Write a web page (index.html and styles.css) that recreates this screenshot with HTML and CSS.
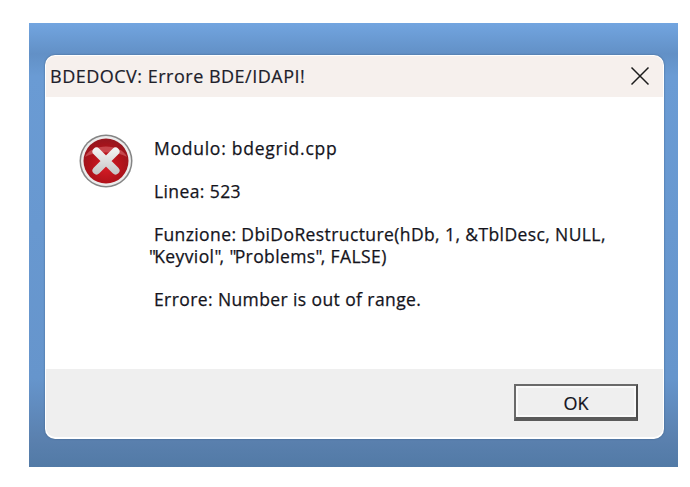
FILE: index.html
```html
<!DOCTYPE html>
<html lang="en">
<head>
    <meta charset="UTF-8">
    <title>BDEDOCV: Errore BDE/IDAPI!</title>
    <link rel="stylesheet" href="styles.css">
</head>
<body>
    <div class="desktop">
        <div class="dialog">
            <div class="titlebar">
                <span class="title">BDEDOCV: Errore BDE/IDAPI!</span>
                <svg class="close" width="20" height="20" viewBox="0 0 20 20">
                    <path d="M1.5 1.5L18.5 18.5M18.5 1.5L1.5 18.5" stroke="#1c1c1c" stroke-width="1.5" fill="none"/>
                </svg>
            </div>
            <div class="content">
                <svg class="error-icon" width="54" height="54" viewBox="0 0 54 54">
                    <defs>
                        <radialGradient id="redFill" cx="50%" cy="62%" r="58%">
                            <stop offset="0" stop-color="#d81c26"/>
                            <stop offset="0.65" stop-color="#b0121a"/>
                            <stop offset="1" stop-color="#98161e"/>
                        </radialGradient>
                        <linearGradient id="crossFill" gradientUnits="userSpaceOnUse" x1="0" y1="13" x2="0" y2="41">
                            <stop offset="0" stop-color="#f6f6f6"/>
                            <stop offset="1" stop-color="#c4c4c4"/>
                        </linearGradient>
                    </defs>
                    <circle cx="27" cy="27" r="26.500" fill="#858585"/>
                    <circle cx="27" cy="27" r="25" fill="#ececec"/>
                    <circle cx="27" cy="27" r="22.500" fill="url(#redFill)"/>
                    <path d="M6 23C12 9 42 9 48 23C38 17 16 17 6 23Z" fill="#d9686c" opacity="0.6"/>
                    <path d="M17.500 17.500L36.500 36.500M36.500 17.500L17.500 36.500" stroke="url(#crossFill)" stroke-width="8" stroke-linecap="round" fill="none"/>
                </svg>
                <div class="message">
                    <p class="module">Modulo: bdegrid.cpp</p>
                    <p>Linea: 523</p>
                    <p>Funzione: DbiDoRestructure(hDb, 1, &amp;TblDesc, NULL,<br><span class="quote">"</span>Keyviol<span class="quote">"</span>, <span class="quote">"</span>Problems<span class="quote">"</span>, FALSE)</p>
                    <p>Errore: Number is out of range.</p>
                </div>
            </div>
            <div class="footer">
                <button class="ok">OK</button>
            </div>
        </div>
    </div>
</body>
</html>
```
FILE: styles.css
```css
html, body {
    margin: 0;
    height: 100%;
    background-color: #fff;
}
body {
    padding: 23px 12px 20px 29px;
    box-sizing: border-box;
    font-family: "Open Sans", "Noto Sans", sans-serif;
    color: #14141c;
}
.desktop {
    width: 649px;
    height: 444px;
    box-sizing: border-box;
    padding: 32px 14px 28px 16px;
    background: linear-gradient(#72a5e0 0%, #6290c6 7%, #6a9bd4 12%, #6695cc 80%, #5a80ae 94%, #527aa6 100%);
}
.dialog {
    display: flex;
    flex-direction: column;
    height: 100%;
    box-sizing: border-box;
    padding: 1px 1px 2px 1px;
    border-radius: 10px;
    background-color: #fff;
    overflow: hidden;
    box-shadow: 0 0 2px #3f5f85;
}
.titlebar {
    display: flex;
    justify-content: space-between;
    align-items: center;
    height: 41px;
    flex: none;
    padding: 0 13px 0 4px;
    background-color: #f6f0ed;
    border-radius: 9px 9px 0 0;
}
.title {
    font-size: 18px;
    letter-spacing: 0.5px;
    color: #20202a;
    -webkit-text-stroke: 0.2px #20202a;
    margin-top: -1px;
}
.close {
    margin-top: -1px;
}
.content {
    display: flex;
    flex: 1;
    background-color: #fff;
}
.error-icon {
    flex: none;
    margin: 37px 0 0 33px;
}
.message {
    margin: 40px 0 0 16px;
    font-size: 17.500px;
    line-height: 22px;
    letter-spacing: 0.4px;
    -webkit-text-stroke: 0.25px #14141c;
}
.message p {
    margin: 0 0 21px 0;
    text-indent: 5px;
}
.message .module {
    letter-spacing: 0.75px;
}
.quote {
    letter-spacing: -1.800px;
}
.footer {
    display: flex;
    justify-content: flex-end;
    align-items: flex-start;
    height: 68px;
    flex: none;
    box-sizing: border-box;
    padding: 15px 25px 0 0;
    background-color: #efefef;
    border-radius: 0 0 9px 9px;
}
.ok {
    width: 124px;
    height: 37px;
    padding: 3px 0 0 0;
    font-family: inherit;
    font-size: 18px;
    color: #14141c;
    background-color: #efefef;
    border: 2px solid;
    border-color: #6a6a6a #4a4a4a #5a5a5a #6a6a6a;
    border-bottom-width: 4px;
    box-shadow: inset 0 0 0 2px #fafafa;
    -webkit-text-stroke: 0.2px #14141c;
}
```
